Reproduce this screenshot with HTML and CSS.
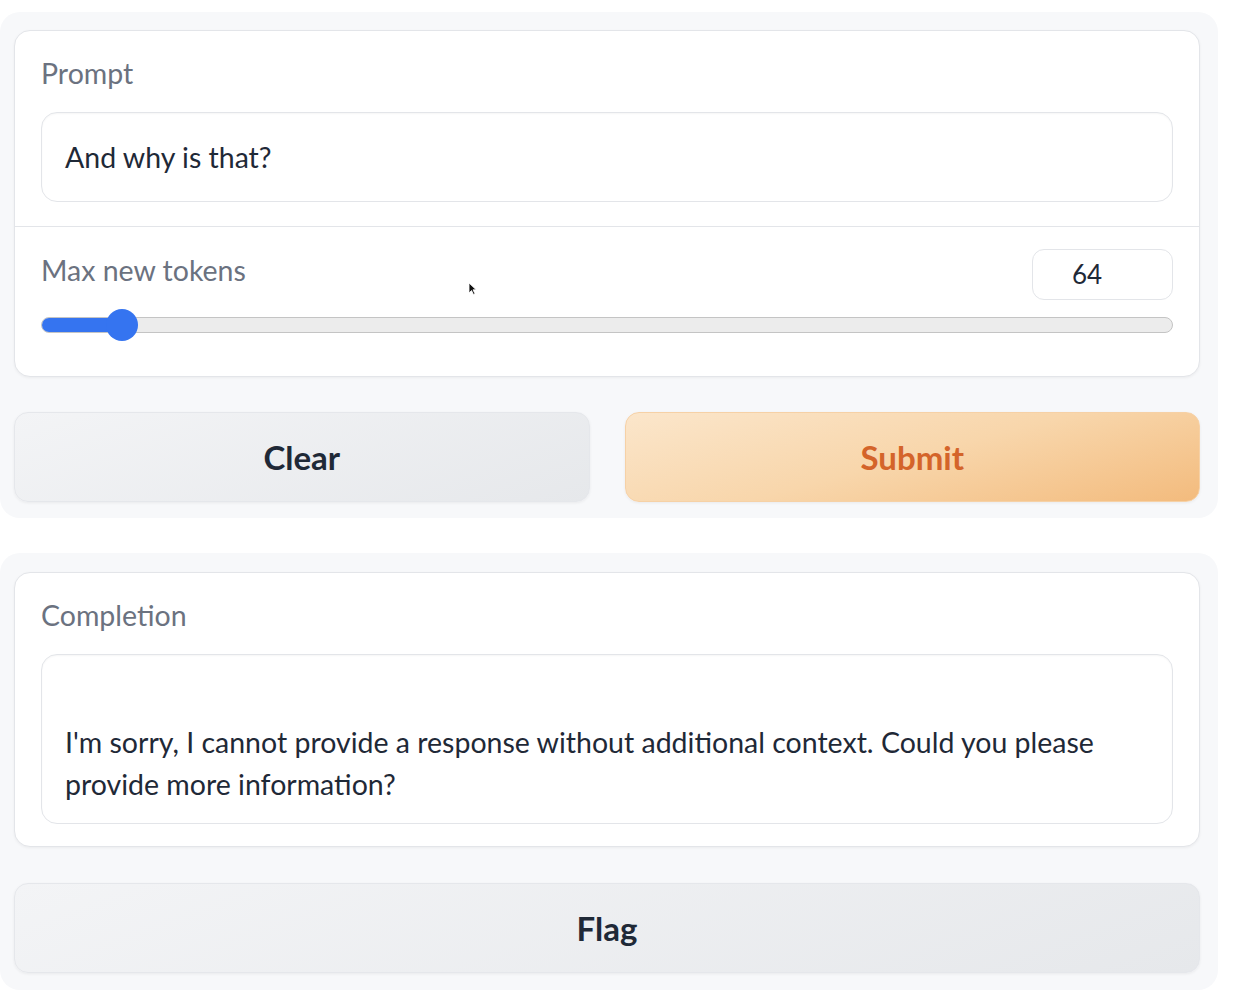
FILE: index.html
```html
<!DOCTYPE html>
<html lang="en">
<head>
<meta charset="utf-8">
<title>Completion demo</title>
<link rel="stylesheet" href="styles.css">
</head>
<body>
<div class="panel panel-top">
  <div class="card">
    <div class="section">
      <div class="label">Prompt</div>
      <div class="textbox">And why is that?</div>
    </div>
    <div class="section section-slider">
      <div class="slider-head">
        <div class="label label-inline">Max new tokens</div>
        <div class="number">64</div>
      </div>
      <div class="slider">
        <div class="track"><div class="fill"></div></div>
        <div class="thumb"></div>
      </div>
      <svg class="cursor" width="9" height="13" viewBox="0 0 9 13"><path d="M1 1 L1 11 L3.5 8.5 L5.5 12.5 L7 11.8 L5 7.8 L8.2 7.8 Z" fill="#111" stroke="#fff" stroke-width="0.8"/></svg>
    </div>
  </div>
  <div class="buttons">
    <div class="btn btn-secondary">Clear</div>
    <div class="btn btn-primary">Submit</div>
  </div>
</div>

<div class="panel panel-bottom">
  <div class="card">
    <div class="section section-out">
      <div class="label">Completion</div>
      <div class="textbox textbox-out"><br>I'm sorry, I cannot provide a response without additional context. Could you please provide more information?</div>
    </div>
  </div>
  <div class="btn btn-secondary btn-flag">Flag</div>
</div>
</body>
</html>
```
FILE: styles.css
```css
* { box-sizing: border-box; }
html, body { margin: 0; padding: 0; background: #ffffff; }
body {
  padding-top: 12px;
  font-family: "Lato", "Noto Sans", sans-serif;
  color: #1f2937;
}
.panel {
  width: 1218px;
  background: #f7f8fa;
  border-radius: 20px;
  padding: 18px 18px 16px 14px;
}
.panel-bottom {
  margin-top: 35px;
  padding-top: 19px;
  padding-bottom: 17px;
}
.card {
  background: #ffffff;
  border: 1px solid #e3e5e9;
  border-radius: 16px;
  box-shadow: 0 1px 3px rgba(0,0,0,0.05);
}
.section {
  padding: 24px 26px 24px 26px;
}
.section-slider {
  position: relative;
  border-top: 1px solid #e3e5e9;
  padding-top: 22px;
  padding-bottom: 39px;
}
.section-out { padding-bottom: 22px; }
.label {
  font-size: 28.5px;
  line-height: 36px;
  color: #6b7280;
  margin-bottom: 21px;
}
.label-inline { margin: 3px 0 0 0; }
.textbox {
  border: 1px solid #e3e5e9;
  border-radius: 16px;
  padding: 23px 23px;
  font-size: 28.5px;
  line-height: 42px;
  color: #1f2937;
  box-shadow: inset 0 1px 2px rgba(0,0,0,0.04);
}
.textbox-out { padding-top: 24px; padding-bottom: 18px; }
.slider-head {
  display: flex;
  justify-content: space-between;
  align-items: flex-start;
}
.number {
  width: 141px;
  height: 51px;
  border: 1px solid #e3e5e9;
  border-radius: 12px;
  padding-left: 39px;
  font-size: 26px;
  line-height: 49px;
  color: #1f2937;
}
.slider {
  position: relative;
  margin-top: 13px;
  height: 24px;
  display: flex;
  align-items: center;
}
.track {
  width: 100%;
  height: 16px;
  border-radius: 8px;
  background: #ececec;
  border: 1px solid #c4c4c4;
  overflow: hidden;
}
.fill {
  width: 81px;
  height: 100%;
  background: #3574f0;
}
.thumb {
  position: absolute;
  left: 65px;
  top: -4px;
  width: 32px;
  height: 32px;
  border-radius: 50%;
  background: #3574f0;
}
.cursor {
  position: absolute;
  left: 453px;
  top: 55px;
}
.buttons {
  display: flex;
  gap: 35px;
  margin-top: 35px;
}
.btn {
  flex: 1;
  height: 90px;
  border-radius: 14px;
  display: flex;
  align-items: center;
  justify-content: center;
  font-size: 33px;
  font-weight: 700;
}
.btn-secondary {
  background: linear-gradient(160deg, #f3f4f6 0%, #e6e8eb 100%);
  border: 1px solid #e5e7eb;
  color: #1f2937;
  box-shadow: 0 1px 3px rgba(0,0,0,0.06);
}
.btn-primary {
  background: linear-gradient(165deg, #fbe6cb 0%, #f8d6ab 50%, #f3bb7d 100%);
  border: 1px solid #f6d1a6;
  color: #d4642a;
  box-shadow: 0 1px 3px rgba(0,0,0,0.06);
}
.btn-flag {
  margin-top: 36px;
}
```
